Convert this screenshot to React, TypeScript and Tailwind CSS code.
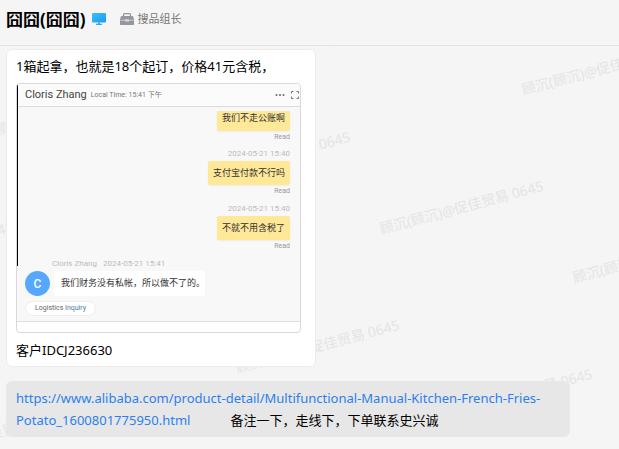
import React from "react";

// bottom-left anchor of every watermark stamp
const watermarks = [
  { x: 331, y: 49 },
  { x: 524, y: 98 },
  { x: -4, y: 139 },
  { x: 189, y: 188 },
  { x: 382, y: 237 },
  { x: 575, y: 286 },
  { x: -148, y: 278 },
  { x: 45, y: 327 },
  { x: 238, y: 376 },
  { x: 431, y: 425 },
  { x: -97, y: 466 },
];

const sent = [
  { time: "2024-05-21 15:40", text: "支付宝付款不行吗" },
  { time: "2024-05-21 15:40", text: "不就不用含税了" },
];

function Watermark() {
  return (
    <div aria-hidden="true" className="pointer-events-none absolute inset-0 overflow-hidden">
      {watermarks.map((w, i) => (
        <span
          key={i}
          className="absolute origin-bottom-left -translate-y-full -rotate-[15deg] whitespace-nowrap text-[14px] leading-4 text-[#e3e4e6]"
          style={{ left: w.x, top: w.y }}
        >
          顾沉(顾沉)@促佳贸易 0645
        </span>
      ))}
    </div>
  );
}

function MonitorIcon() {
  return (
    <svg viewBox="0 0 14 12" className="h-3 w-3.5" aria-hidden="true">
      <defs>
        <linearGradient id="screen" x1="0" y1="0" x2="1" y2="1">
          <stop offset="0" stopColor="#3cc0f8" />
          <stop offset="1" stopColor="#1a9bec" />
        </linearGradient>
      </defs>
      <rect width="14" height="9.500" rx="1" fill="url(#screen)" />
      <path d="M6 9.500h2v1.200h2V12H4v-1.300h2z" fill="#35a9ee" />
    </svg>
  );
}

function BriefcaseIcon() {
  return (
    <svg viewBox="0 0 14 12" className="h-3 w-3.5" aria-hidden="true">
      <path d="M3.500 3.500V2c0-.8.500-1.300 1.200-1.300h4.600c.7 0 1.200.5 1.200 1.300v1.500" fill="none" stroke="#94979c" strokeWidth="1.300" />
      <path d="M2 3h10c.7 0 1.200.4 1.400 1.200L14 7v4c0 .6-.4 1-1 1H1c-.6 0-1-.4-1-1V7l.6-2.800C.8 3.400 1.300 3 2 3z" fill="#94979c" />
      <path d="M.5 7.300h13" stroke="#d8d9db" strokeWidth=".8" />
      <rect x="5" y="6.200" width="4" height="2.300" rx=".6" fill="#d8d9db" />
    </svg>
  );
}

function ChatShot() {
  return (
    <section className="overflow-hidden rounded-sm border border-[#d9d9d9] bg-white [font-family:Roboto,'Noto_Sans_CJK_SC',sans-serif]">
      <div className="relative">
        <div className="absolute top-0 left-0 h-[182px] w-px bg-black" />
        <header className="flex h-[23px] items-center border-b border-[#dcdcdc] bg-[#fbfbfb] pr-px pl-2 shadow-sm">
          <h2 className="text-[11px] leading-4 text-[#444]">Cloris Zhang</h2>
          <span className="ml-1 text-[7px] leading-3 text-[#777]">Local Time: 15:41 下午</span>
          <button type="button" aria-label="More" className="mr-1.5 ml-auto">
            <svg viewBox="0 0 10 8" className="h-2 w-2.5" fill="#666">
              <circle cx="1.500" cy="4" r="1" />
              <circle cx="5" cy="4" r="1" />
              <circle cx="8.500" cy="4" r="1" />
            </svg>
          </button>
          <button type="button" aria-label="Full screen">
            <svg viewBox="0 0 8 8" className="size-2" fill="none" stroke="#777">
              <path d="M.5 2.500v-2h2M5.500.5h2v2M7.500 5.500v2h-2M2.500 7.500h-2v-2" />
            </svg>
          </button>
        </header>

        <div className="border-b border-[#dedede] bg-[#f8f8f8] px-2 pt-1 pb-[5px]">
          <div className="flex flex-col items-end pr-0.5">
            <p className="h-5 rounded-b-xs bg-[#ffe898] px-[5px] text-[9px] leading-[14px] text-[#333] shadow-xs">我们不走公账啊</p>
            <span className="text-[7px] leading-3 text-[#999]">Read</span>
            {sent.map((m) => (
              <React.Fragment key={m.text}>
                <time className="mt-1 text-[8px] leading-[14px] text-[#bbb]">{m.time}</time>
                <p className="rounded-xs bg-[#ffe898] px-[5px] text-[9px] leading-6 text-[#333] shadow-xs">{m.text}</p>
                <span className="text-[7px] leading-[13px] text-[#999]">Read</span>
              </React.Fragment>
            ))}
          </div>

          <p className="mt-1 pl-[27px] text-[8px] leading-[14px] text-[#bbb]">
            Cloris Zhang <time className="ml-1">2024-05-21 15:41</time>
          </p>
          <div className="flex gap-1">
            <div className="flex size-[25px] items-center justify-center rounded-full bg-[#55a8fd] text-[12px] font-medium text-white">C</div>
            <p className="rounded-xs bg-white pl-[7px] text-[9px] leading-[25px] text-[#333]">我们财务没有私帐，所以做不了的。</p>
          </div>
          <button type="button" className="mt-[5px] block rounded-full border border-[#eee] bg-white px-[9px] text-[7px] leading-[13px] text-[#666]">
            Logistics <span className="text-[#4a7ba8]">Inquiry</span>
          </button>
        </div>
        <div className="h-2.5" />
      </div>
    </section>
  );
}

export default function App() {
  return (
    <div className="relative min-h-screen overflow-hidden bg-[#f5f5f5] [font-family:'Noto_Sans','Noto_Sans_CJK_SC',sans-serif] text-[13px] text-black">
      <Watermark />

      <header className="relative flex h-[46px] items-center border-b border-[#e3e3e3] bg-[#f5f5f5] px-1.5 pb-[7px]">
        <h1 className="pt-px text-[17px] font-bold">囧囧(囧囧)</h1>
        <span className="ml-1.5">
          <MonitorIcon />
        </span>
        <span className="ml-3.5 flex items-center gap-1 text-[11px] text-[#777]">
          <BriefcaseIcon />
          搜品组长
        </span>
      </header>

      <main className="relative flex flex-col items-start gap-3.5 px-1.5 pt-[3px]">
        <article className="w-[310px] rounded-md border border-[#ececec] bg-white px-[9px]">
          <p className="leading-8">1箱起拿，也就是18个起订，价格41元含税，</p>
          <div className="pt-px pr-[5px] pb-px">
            <ChatShot />
          </div>
          <p className="leading-8">客户IDCJ236630</p>
        </article>

        <article className="max-w-[564px] rounded-md bg-[#e7e7e7] px-2.5 py-1.5 leading-[22px]">
          <a href="https://www.alibaba.com/product-detail/Multifunctional-Manual-Kitchen-French-Fries-Potato_1600801775950.html" className="text-[#2b7ff0]">
            https://www.alibaba.com/product-detail/Multifunctional-Manual-Kitchen-French-Fries-Potato_1600801775950.html
          </a>
          <span className="ml-10">备注一下，走线下，下单联系史兴诚</span>
        </article>
      </main>
    </div>
  );
}
